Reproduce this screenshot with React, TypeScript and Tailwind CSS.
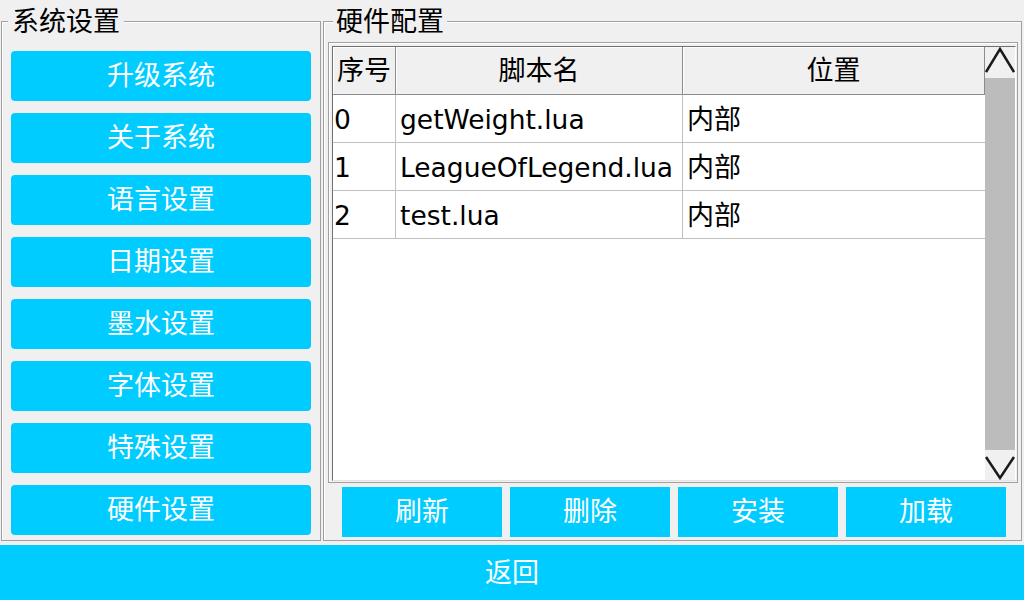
import React from 'react';

interface Script {
  id: number;
  name: string;
  place: string;
}

// 左侧菜单
const menus = ['升级系统', '关于系统', '语言设置', '日期设置', '墨水设置', '字体设置', '特殊设置', '硬件设置'];

// 脚本列表
const scripts: Script[] = [
  { id: 0, name: 'getWeight.lua', place: '内部' },
  { id: 1, name: 'LeagueOfLegend.lua', place: '内部' },
  { id: 2, name: 'test.lua', place: '内部' },
];

const actions = ['刷新', '删除', '安装', '加载'];

const App: React.FC = () => {
  return (
    <div className="w-[1024px] h-[600px] overflow-hidden bg-[#f0f0f0] text-black flex flex-col font-['DejaVu_Sans','Noto_Sans_CJK_SC',sans-serif]">
      <div className="h-[545px] flex items-start">
        {/* ---------- 系统设置 ---------- */}
        <fieldset className="ml-[1px] w-[320px] border border-[#a0a0a0] px-[9px] pt-[9px] pb-[5px] shadow-[inset_1px_1px_0_#fff]">
          <legend className="ml-[-3px] px-[4px] pt-[1px] leading-[41px] text-[27px] bg-[#f0f0f0]">系统设置</legend>
          <div className="flex flex-col gap-[12px]">
            {menus.map(menu => (
              <button
                key={menu}
                type="button"
                className="h-[50px] pt-[1px] rounded-[4px] bg-[#00ccff] text-white text-[27px] flex items-center justify-center"
              >
                {menu}
              </button>
            ))}
          </div>
        </fieldset>

        {/* ---------- 硬件配置 ---------- */}
        <fieldset className="ml-[2px] w-[699px] border border-[#a0a0a0] pl-[4px] pr-[3px] pb-[3px] shadow-[inset_1px_1px_0_#fff]">
          <legend className="ml-[5px] px-[3px] pt-[1px] leading-[41px] text-[27px] bg-[#f0f0f0]">硬件配置</legend>
          <div className="w-[690px] h-[441px] border border-[#a0a0a0] pt-[3px] pl-[3px] pr-[1px] pb-[1px] flex shadow-[inset_1px_1px_0_#fff]">
            <div className="flex-1 flex bg-white border border-[#707070] border-r-white border-b-[#e4e4e4]">
              <div className="w-[652px] flex flex-col">
                <div className="grid grid-cols-[63px_287px_302px] h-[48px]">
                  {['序号', '脚本名', '位置'].map(title => (
                    <div
                      key={title}
                      className="bg-[#f0f0f0] pt-[2px] border-r border-b border-[#8c8c8c] shadow-[inset_1px_1px_0_#fff] flex items-center justify-center text-[27px]"
                    >
                      {title}
                    </div>
                  ))}
                </div>
                {scripts.map(script => (
                  <div key={script.id} className="grid grid-cols-[63px_287px_302px] h-[48px]">
                    <div className="border-r border-b border-[#c0c0c0] pl-[1px] pt-[3px] flex items-center text-[26.5px]">
                      {script.id}
                    </div>
                    <div className="border-r border-b border-[#c0c0c0] pl-[4px] pt-[3px] flex items-center text-[26.5px] whitespace-nowrap">
                      {script.name}
                    </div>
                    <div className="border-b border-[#c0c0c0] pl-[4px] pt-[3px] flex items-center text-[27px]">
                      {script.place}
                    </div>
                  </div>
                ))}
              </div>
              {/* 滚动条 */}
              <div className="w-[30px] flex flex-col bg-[#f0f0f0]">
                <div className="h-[31px]">
                  <svg width="30" height="31" viewBox="0 0 30 31">
                    <polyline points="1,25 15,2 29,25" fill="none" stroke="#1a1a1a" strokeWidth="2.5" />
                  </svg>
                </div>
                <div className="flex-1 bg-[#bcbcbc]" />
                <div className="h-[30px]">
                  <svg width="30" height="30" viewBox="0 0 30 30">
                    <polyline points="1,7 15,28 29,7" fill="none" stroke="#1a1a1a" strokeWidth="2.5" />
                  </svg>
                </div>
              </div>
            </div>
          </div>
          <div className="mt-[4px] ml-[14px] mr-[12px] grid grid-cols-4 gap-[8px]">
            {actions.map(action => (
              <button
                key={action}
                type="button"
                className="h-[50px] pt-[1px] bg-[#00ccff] text-white text-[27px] flex items-center justify-center"
              >
                {action}
              </button>
            ))}
          </div>
        </fieldset>
      </div>

      {/* ---------- 返回 ---------- */}
      <button type="button" className="h-[55px] w-full pt-[1px] bg-[#00ccff] text-white text-[27px] flex items-center justify-center">
        返回
      </button>
    </div>
  );
};

export default App;
